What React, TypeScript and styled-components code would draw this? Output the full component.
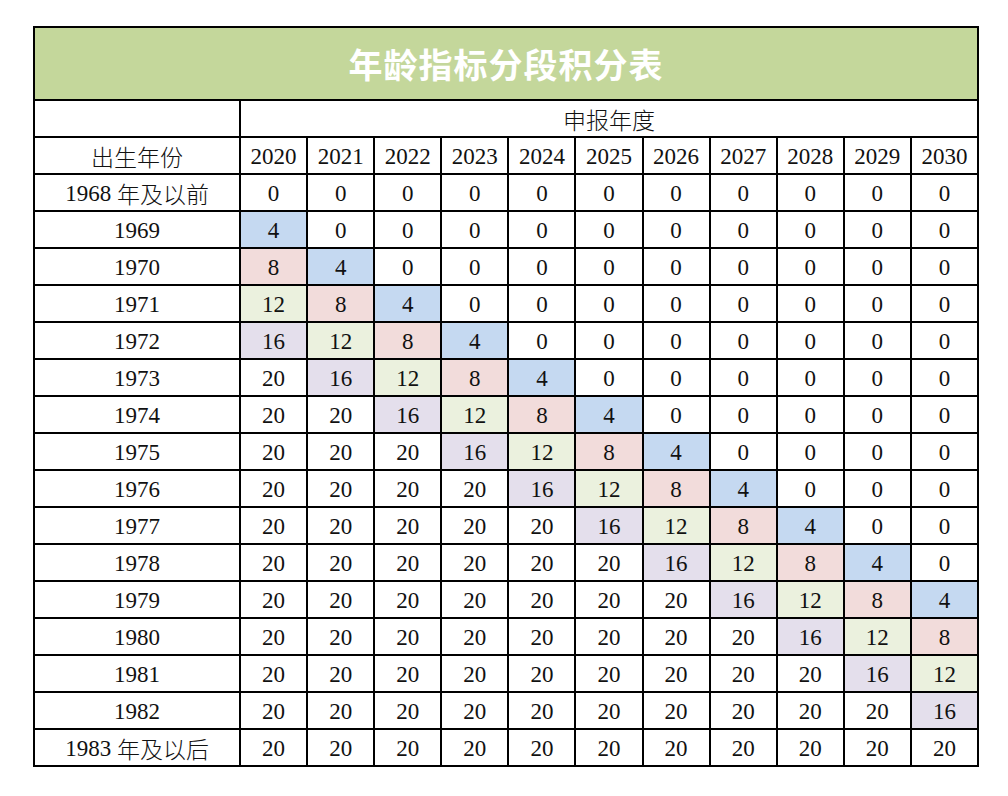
import React from "react";
import styled, { createGlobalStyle } from "styled-components";

const Global = createGlobalStyle`
  html, body { margin: 0; padding: 0; background: #ffffff; }
  body { font-family: "Liberation Serif", "Noto Sans CJK SC", serif; }
`;

const Page = styled.div`
  padding: 26px 0 0 33px;
`;

const Grid = styled.div`
  width: 946px;
  box-sizing: border-box;
  border: 2px solid #000;
  background: #000;
  display: grid;
  grid-template-columns: 204px repeat(11, 1fr);
  grid-template-rows: 71px repeat(18, 35px);
  gap: 2px;
`;

const Title = styled.div`
  grid-column: 1 / -1;
  background: #c4d79b;
  color: #ffffff;
  font-family: "Noto Sans CJK SC", sans-serif;
  font-weight: 700;
  font-size: 34px;
  letter-spacing: 1px;
  display: flex;
  align-items: center;
  justify-content: center;
`;

type Tone = "none" | "blue" | "pink" | "green" | "purple";

const toneColor: Record<Tone, string> = {
  none: "#ffffff",
  blue: "#c5d9f1",
  pink: "#f2dcdb",
  green: "#ebf1de",
  purple: "#e4dfec",
};

const Cell = styled.div<{ $tone?: Tone; $span?: number }>`
  background: ${(p) => toneColor[p.$tone ?? "none"]};
  grid-column: ${(p) => (p.$span ? `span ${p.$span}` : "auto")};
  color: #111;
  font-family: "Liberation Serif", "Noto Sans CJK SC", serif;
  font-size: 23px;
  display: flex;
  align-items: center;
  justify-content: center;
  padding-top: 3px;
  box-sizing: border-box;
  white-space: nowrap;
`;

const Han = styled.span`
  font-family: "Noto Sans CJK SC", sans-serif;
  font-weight: 300;
  font-size: 23px;
  position: relative;
  top: -1px;
`;

const years = Array.from({ length: 11 }, (_, i) => 2020 + i);
const births = Array.from({ length: 14 }, (_, i) => 1969 + i);

const score = (birth: number, year: number) =>
  Math.min(20, Math.max(0, 4 * (birth - 1968 - (year - 2020))));

const toneFor = (v: number): Tone =>
  v === 4 ? "blue" : v === 8 ? "pink" : v === 12 ? "green" : v === 16 ? "purple" : "none";

export default function App() {
  return (
    <Page>
      <Global />
      <Grid>
        <Title>年龄指标分段积分表</Title>
        <Cell />
        <Cell $span={11}>
          <Han>申报年度</Han>
        </Cell>
        <Cell>
          <Han>出生年份</Han>
        </Cell>
        {years.map((y) => (
          <Cell key={`h${y}`}>{y}</Cell>
        ))}
        <Cell>
          1968&nbsp;<Han>年及以前</Han>
        </Cell>
        {years.map((y) => (
          <Cell key={`a${y}`}>0</Cell>
        ))}
        {births.map((b) => (
          <React.Fragment key={b}>
            <Cell>{b}</Cell>
            {years.map((y) => {
              const v = score(b, y);
              return (
                <Cell key={`${b}-${y}`} $tone={toneFor(v)}>
                  {v}
                </Cell>
              );
            })}
          </React.Fragment>
        ))}
        <Cell>
          1983&nbsp;<Han>年及以后</Han>
        </Cell>
        {years.map((y) => (
          <Cell key={`z${y}`}>20</Cell>
        ))}
      </Grid>
    </Page>
  );
}
